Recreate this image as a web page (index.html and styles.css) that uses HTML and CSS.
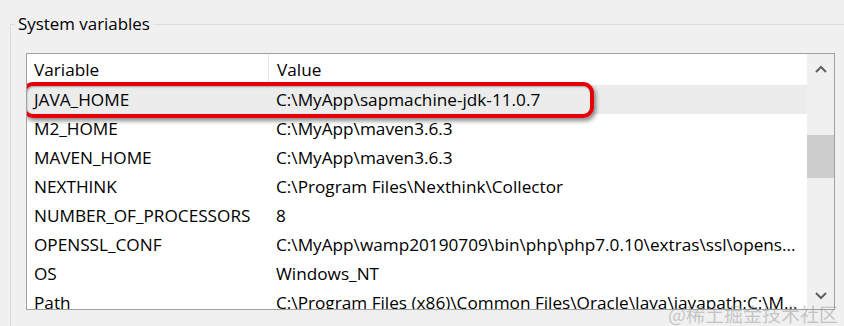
FILE: index.html
```html
<!DOCTYPE html>
<html lang="en">
<head>
    <meta charset="UTF-8">
    <title>System variables</title>
    <link rel="stylesheet" href="styles.css">
</head>
<body>
    <div class="group">
        <span class="group-title">System variables</span>

        <div class="listbox">
            <div class="table">
                <div class="row head">
                    <div class="cell name">Variable</div>
                    <div class="cell value">Value</div>
                </div>
                <div class="row hot">
                    <div class="cell name">JAVA_HOME</div>
                    <div class="cell value">C:\MyApp\sapmachine-jdk-11.0.7</div>
                </div>
                <div class="row">
                    <div class="cell name">M2_HOME</div>
                    <div class="cell value">C:\MyApp\maven3.6.3</div>
                </div>
                <div class="row">
                    <div class="cell name">MAVEN_HOME</div>
                    <div class="cell value">C:\MyApp\maven3.6.3</div>
                </div>
                <div class="row">
                    <div class="cell name">NEXTHINK</div>
                    <div class="cell value">C:\Program Files\Nexthink\Collector</div>
                </div>
                <div class="row">
                    <div class="cell name">NUMBER_OF_PROCESSORS</div>
                    <div class="cell value">8</div>
                </div>
                <div class="row">
                    <div class="cell name">OPENSSL_CONF</div>
                    <div class="cell value">C:\MyApp\wamp20190709\bin\php\php7.0.10\extras\ssl\opens...</div>
                </div>
                <div class="row">
                    <div class="cell name">OS</div>
                    <div class="cell value">Windows_NT</div>
                </div>
                <div class="row">
                    <div class="cell name">Path</div>
                    <div class="cell value">C:\Program Files (x86)\Common Files\Oracle\Java\javapath;C:\M...</div>
                </div>
            </div>

            <div class="scrollbar">
                <svg class="arrow" width="14" height="10" viewBox="0 0 14 10">
                    <path d="M2 8 L7 3 L12 8" fill="none" stroke="#606060" stroke-width="2"/>
                </svg>
                <div class="track">
                    <div class="thumb"></div>
                </div>
                <svg class="arrow" width="14" height="10" viewBox="0 0 14 10">
                    <path d="M2 2 L7 7 L12 2" fill="none" stroke="#606060" stroke-width="2"/>
                </svg>
            </div>

            <!-- red marker drawn over the JAVA_HOME row -->
            <div class="marker"></div>
        </div>
    </div>

    <div class="watermark">@稀土掘金技术社区</div>
</body>
</html>
```

FILE: styles.css
```css
html {
    overflow: hidden;
}
body {
    margin: 0;
    height: 326px;
    overflow: hidden;
    background-color: #f0f0f0;
    font-family: "Open Sans", "Noto Sans", sans-serif;
    font-size: 17.2px;
    color: #000;
    position: relative;
}
.group {
    position: relative;
    margin: 24px 0 0 10px;
    border-top: 1px solid #dcdcdc;
    border-left: 1px solid #dcdcdc;
    padding: 28px 0 0 15px;
    height: 273px;
}
.group-title {
    position: absolute;
    top: -14px;
    left: 4px;
    padding: 0 3px;
    background-color: #f0f0f0;
    font-size: 16.9px;
    line-height: 26px;
}
.listbox {
    position: relative;
    display: flex;
    width: 807px;
    height: 255px;
    border: 1px solid #a0a0a0;
    background-color: #fff;
    overflow: hidden;
}
.table {
    flex: 1;
    min-width: 0;
}
.row {
    display: flex;
    height: 29px;
    align-items: center;
}
.row.head {
    height: 31px;
}
.row.hot {
    background-color: #ececec;
}
.cell {
    white-space: nowrap;
    overflow: hidden;
    text-overflow: ellipsis;
}
.name {
    width: 234px;
    padding-left: 7px;
    flex-shrink: 0;
}
.value {
    flex: 1;
    padding-left: 8px;
}
.head .name {
    border-right: 1px solid #e5e5e5;
    height: 31px;
    line-height: 31px;
}
.scrollbar {
    width: 27px;
    display: flex;
    flex-direction: column;
    align-items: center;
    background-color: #f0f0f0;
    padding: 10px 0 8px;
}
.arrow {
    flex-shrink: 0;
}
.track {
    flex: 1;
    width: 100%;
    padding: 61px 1px 0;
}
.thumb {
    height: 43px;
    background-color: #cdcdcd;
}
.marker {
    position: absolute;
    left: -5px;
    top: 28px;
    width: 564px;
    height: 28px;
    border: 4px solid #e3000b;
    border-radius: 11px;
    box-shadow: 2px 3px 4px rgba(0, 0, 0, 0.45), inset 1px 1px 2px rgba(0, 0, 0, 0.3);
}
.watermark {
    position: absolute;
    right: 6px;
    bottom: 0;
    font-family: "Noto Sans CJK SC", sans-serif;
    font-size: 19px;
    line-height: 24px;
    color: rgba(140, 140, 140, 0.45);
}
```
